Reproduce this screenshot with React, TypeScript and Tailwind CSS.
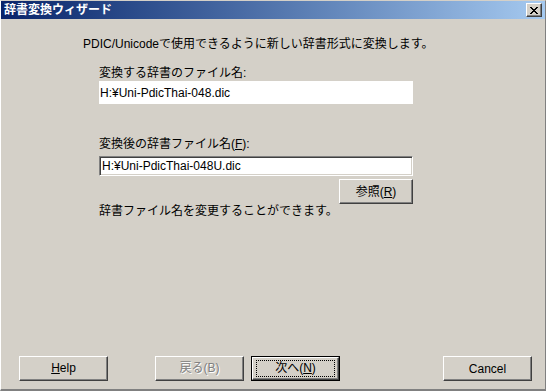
import type { ReactNode } from "react";

const FONT = "font-['Liberation_Sans','Noto_Sans_CJK_JP',sans-serif]";

type ButtonProps = {
  children: ReactNode;
  width?: string;
  disabled?: boolean;
  isDefault?: boolean;
};

// Windows classic 3D push button
const ClassicButton = ({ children, width = "w-[89px]", disabled, isDefault }: ButtonProps) => {
  const face = (
    <span
      className={`flex h-full w-full items-center justify-center border border-t-white border-l-white border-r-[#404040] border-b-[#404040] bg-[#d4d0c8] shadow-[inset_-1px_-1px_#808080] text-[12px] ${
        disabled ? "text-[#808080] [text-shadow:1px_1px_#ffffff]" : "text-black"
      }`}
    >
      {isDefault ? (
        <span className="flex h-[17px] w-[79px] items-center justify-center border border-dotted border-black">
          {children}
        </span>
      ) : (
        children
      )}
    </span>
  );

  if (isDefault) {
    return (
      <button type="button" className={`${width} h-[25px] border border-black p-0`}>
        {face}
      </button>
    );
  }
  return (
    <button type="button" className={`${width} h-[25px] p-0`} disabled={disabled}>
      {face}
    </button>
  );
};

const CloseIcon = () => (
  <svg width="8" height="7" viewBox="0 0 8 7" shapeRendering="crispEdges">
    <path d="M0 0h2v1h-2zM6 0h2v1h-2zM1 1h2v1h-2zM5 1h2v1h-2zM2 2h4v1h-4zM3 3h2v1h-2zM2 4h4v1h-4zM1 5h2v1h-2zM5 5h2v1h-2zM0 6h2v1h-2zM6 6h2v1h-2z" fill="#000" />
  </svg>
);

export default function App() {
  return (
    <div
      className={`flex h-[391px] w-[546px] flex-col overflow-hidden border-l border-t border-l-white border-t-[#d4d0c8] border-r border-b-2 border-r-[#808080] border-b-[#808080] bg-[#d4d0c8] ${FONT}`}
    >
      {/* タイトルバー */}
      <div className="flex h-[18px] shrink-0 items-center justify-between bg-gradient-to-r from-[#0a246a] to-[#a6caf0] pl-[3px] pr-[3px]">
        <span className="text-[12px] font-bold leading-none text-white">辞書変換ウィザード</span>
        <button
          type="button"
          className="flex h-[14px] w-[16px] items-center justify-center border border-t-white border-l-white border-r-[#404040] border-b-[#404040] bg-[#d4d0c8] shadow-[inset_-1px_-1px_#808080]"
        >
          <CloseIcon />
        </button>
      </div>

      <div className="flex flex-1 flex-col">
        <p className="mt-[17px] pl-[82px] text-[12px] leading-[16px] text-black">
          PDIC/Unicodeで使用できるように新しい辞書形式に変換します。
        </p>

        <div className="flex w-[314px] flex-col self-start ml-[98px]">
          <label className="mt-[13px] text-[12px] leading-[16px] text-black">変換する辞書のファイル名:</label>
          <div className="flex h-[23px] w-full items-center bg-white pl-[1px] text-[12px] text-black">
            H:¥Uni-PdicThai-048.dic
          </div>

          <label className="mt-[32px] text-[12px] leading-[16px] text-black">
            変換後の辞書ファイル名(<span className="underline">F</span>):
          </label>
          <div className="mt-[4px] flex h-[20px] w-full items-center border border-t-[#808080] border-l-[#808080] border-r-white border-b-white bg-white pl-[2px] text-[12px] text-black shadow-[inset_1px_1px_#404040,inset_-1px_-1px_#d4d0c8]">
            H:¥Uni-PdicThai-048U.dic
          </div>

          <div className="mt-[3px] flex justify-end">
            <span className="flex h-[24px] w-[74px]">
              <ClassicButton width="w-[74px]">
                参照(<span className="underline">R</span>)
              </ClassicButton>
            </span>
          </div>

          <p className="text-[12px] leading-[16px] text-black">辞書ファイル名を変更することができます。</p>
        </div>

        {/* 下部ボタン */}
        <div className="mt-auto flex items-center pb-[8px] pl-[18px] pr-[13px]">
          <ClassicButton>
            <span className="underline">H</span>elp
          </ClassicButton>
          <div className="ml-[47px] flex gap-[7px]">
            <ClassicButton disabled>戻る(B)</ClassicButton>
            <ClassicButton isDefault>
              次へ(<span className="underline">N</span>)
            </ClassicButton>
          </div>
          <div className="ml-auto">
            <ClassicButton>Cancel</ClassicButton>
          </div>
        </div>
      </div>
    </div>
  );
}
